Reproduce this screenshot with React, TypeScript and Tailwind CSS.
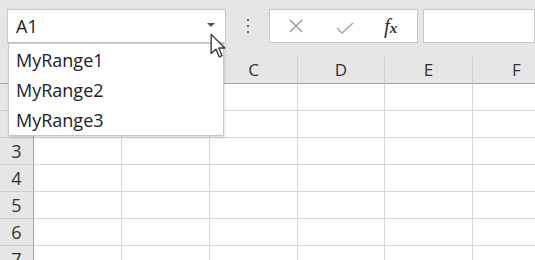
import React from "react";

const columns = ["A", "B", "C", "D", "E", "F"];
const rows = [1, 2, 3, 4, 5, 6, 7];
const ranges = ["MyRange1", "MyRange2", "MyRange3"];

function Cursor() {
  return (
    <svg width="18" height="26" viewBox="0 0 12 19" className="absolute left-[209px] top-[33px]">
      <path
        d="M1 1 L1 15 L4.5 11.8 L7 17.5 L9 16.6 L6.6 11 L11 11 Z"
        fill="#ffffff"
        stroke="#3a3a3a"
        strokeWidth="1"
        strokeLinejoin="round"
      />
    </svg>
  );
}

export default function App() {
  return (
    <div
      className="relative w-[535px] h-[260px] overflow-hidden bg-[#e6e6e6]"
      style={{ fontFamily: '"Open Sans", "Noto Sans", sans-serif' }}
    >
      {/* formula bar */}
      <div className="flex h-[57px] pt-[9px]">
        <div className="ml-[7px] w-[219px] h-[34px] bg-white border border-[#c8c8c8] flex items-center pl-[8px] pr-[10px]">
          <span className="text-[18px] text-[#222] flex-1">A1</span>
          <div className="w-0 h-0 border-l-[4px] border-r-[4px] border-t-[4px] border-l-transparent border-r-transparent border-t-[#555] mb-[3px]" />
        </div>
        <div className="w-[43px] flex flex-col items-center pt-[10px] gap-[4px]">
          <div className="w-[2px] h-[2px] bg-[#6a6a6a]" />
          <div className="w-[2px] h-[2px] bg-[#6a6a6a]" />
          <div className="w-[2px] h-[2px] bg-[#6a6a6a]" />
        </div>
        <div className="w-[149px] h-[34px] bg-white border border-[#c8c8c8] flex items-center">
          <svg width="14" height="14" viewBox="0 0 14 14" className="ml-[19px]">
            <path d="M1 1 L13 13 M13 1 L1 13" stroke="#9c9c9c" strokeWidth="1.5" />
          </svg>
          <svg width="18" height="12" viewBox="0 0 18 12" className="ml-[33px] mt-[4px]">
            <path d="M1 6 L6 11 L17 1" stroke="#a8a8a8" strokeWidth="1.6" fill="none" />
          </svg>
          <span
            className="ml-[30px] text-[21px] italic text-[#333] leading-none"
            style={{ fontFamily: '"Liberation Serif", serif' }}
          >
            f<span className="text-[15px] font-semibold">x</span>
          </span>
        </div>
        <div className="ml-[5px] flex-1 h-[34px] bg-white border border-[#c8c8c8]" />
      </div>

      {/* sheet grid */}
      <div className="grid grid-cols-[34px_88px_88px_88px_87px_88px_88px] grid-rows-[27px_repeat(7,27px)]">
        <div className="bg-[#e6e6e6] border-r border-b border-[#a8a8a8]" />
        {columns.map((c) => (
          <div
            key={c}
            className="bg-[#e6e6e6] border-r border-[#cfcfcf] border-b border-b-[#9e9e9e] flex items-center justify-center text-[17px] text-[#333]"
          >
            {c}
          </div>
        ))}
        {rows.map((r) => (
          <React.Fragment key={r}>
            <div className="bg-[#e6e6e6] border-r border-r-[#9e9e9e] border-b border-[#cfcfcf] flex items-center justify-center text-[18px] text-[#333]">
              {r}
            </div>
            {columns.map((c) => (
              <div key={c} className="bg-white border-r border-b border-[#d6d6d6]" />
            ))}
          </React.Fragment>
        ))}
      </div>

      {/* name box dropdown */}
      <div className="absolute left-[8px] top-[43px] w-[216px] h-[93px] bg-white border border-[#c6c6c6] shadow-[1px_2px_3px_rgba(0,0,0,0.12)] pt-[1px]">
        {ranges.map((r) => (
          <div key={r} className="h-[30px] flex items-center pl-[7px] text-[18px] text-[#222]">
            {r}
          </div>
        ))}
      </div>

      <Cursor />
    </div>
  );
}
